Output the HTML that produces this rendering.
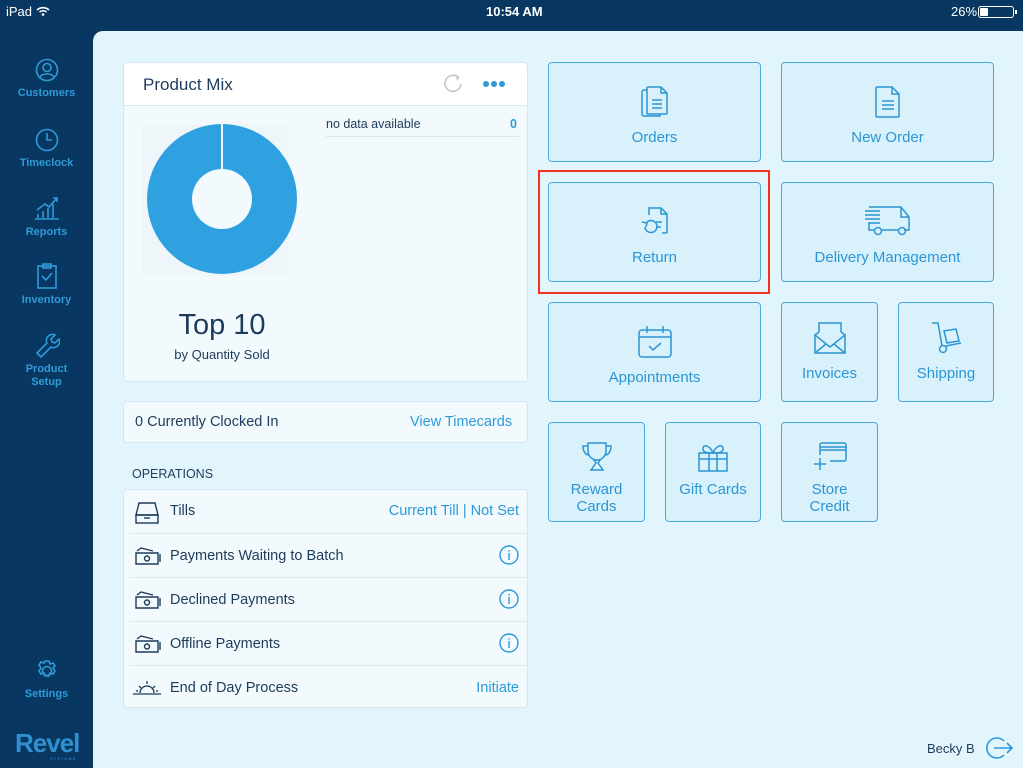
<!DOCTYPE html>
<html><head><meta charset="utf-8"><style>
*{box-sizing:border-box;margin:0;padding:0}
body{width:1023px;height:768px;background:#083862;font-family:"Liberation Sans",sans-serif;position:relative;overflow:hidden}
.abs{position:absolute}
.sb{color:#fff;font-size:13px;top:4px}
.main{left:93px;top:31px;width:930px;height:737px;background:#e3f5fc;border-top-left-radius:10px}
.nav{left:0;width:93px;text-align:center;color:#2f9ad8;font-size:11px;font-weight:bold;line-height:13px}
.nav svg{display:block;margin:0 auto 5px}
.card{background:#f3fafd;border:1px solid #d5e6ee;border-radius:4px}
.btn{background:#d8f1fb;border:1.5px solid #4aaae0;border-radius:4px;color:#2c96d4;font-size:15px;text-align:center;line-height:17px}
.btn svg{display:block;margin:0 auto}
.row{position:absolute;left:5px;right:0;height:44px;border-top:1px solid #dde9ef;font-size:14.5px;color:#1d3b5a}
.row span.l{position:absolute;left:41px;top:13px}
.row .r{position:absolute;right:8px;top:13px;color:#2c9ad8}
.row svg{position:absolute;left:6px;top:12px}
</style></head><body>
<div class="abs sb" style="left:6px">iPad <svg width="14" height="10" viewBox="0 0 14 10" style="vertical-align:0"><path d="M1 4a9 9 0 0 1 12 0M3.5 6a5.5 5.5 0 0 1 7 0" stroke="#fff" stroke-width="1.6" fill="none"/><circle cx="7" cy="8.5" r="1.3" fill="#fff"/></svg></div>
<div class="abs sb" style="left:486px;font-weight:bold">10:54 AM</div>
<div class="abs sb" style="left:951px">26%</div>
<div class="abs" style="left:978px;top:6px;width:36px;height:12px;border:1px solid #fff;border-radius:3px"><div style="margin:1px;width:8px;height:8px;background:#fff;border-radius:1px"></div></div>
<div class="abs" style="left:1015px;top:10px;width:2px;height:4px;background:#fff"></div>

<div class="abs nav" style="top:58px"><svg width="24" height="24" viewBox="0 0 24 24" fill="none" stroke="#2f9ad8" stroke-width="1.6"><circle cx="12" cy="12" r="10.5"/><circle cx="12" cy="9.5" r="4"/><path d="M5 19c2-4 12-4 14 0"/></svg>Customers</div>
<div class="abs nav" style="top:128px"><svg width="24" height="24" viewBox="0 0 24 24" fill="none" stroke="#2f9ad8" stroke-width="1.6"><circle cx="12" cy="12" r="10.5"/><path d="M12 5v7h5"/></svg>Timeclock</div>
<div class="abs nav" style="top:195px"><svg width="28" height="26" viewBox="0 0 28 26" fill="none" stroke="#2f9ad8" stroke-width="1.6"><path d="M2 24h24M5 23v-4M10 23v-7M15 23v-10M20 23v-14M4 15l8-6 4 3 8-9M20 3h4v4"/></svg>Reports</div>
<div class="abs nav" style="top:263px"><svg width="22" height="26" viewBox="0 0 22 26" fill="none" stroke="#2f9ad8" stroke-width="1.6"><rect x="2" y="3" width="18" height="22"/><rect x="7" y="1" width="8" height="4"/><path d="M6 13l4 4 6-7"/></svg>Inventory</div>
<div class="abs nav" style="top:332px"><svg width="26" height="26" viewBox="0 0 26 26" fill="none" stroke="#2f9ad8" stroke-width="1.6"><path d="M3 21l10-10a6 6 0 0 1 8-8l-4 4 1 3 3 1 4-4a6 6 0 0 1-8 8L7 25z"/></svg>Product<br>Setup</div>
<div class="abs nav" style="top:659px"><svg width="24" height="24" viewBox="0 0 24 24" fill="none" stroke="#2f9ad8" stroke-width="1.6"><circle cx="12" cy="12" r="4.5"/><path d="M10 2h4l1 3 3-1 2 3-2 2 2 3-2 3-3-1-1 3h-4l-1-3-3 1-2-3 2-3-2-3 2-3 3 1z"/></svg>Settings</div>
<div class="abs" style="left:15px;top:728px;color:#2f8fd0;font-size:26px;font-weight:bold;letter-spacing:-1px">Revel</div>
<div class="abs" style="left:50px;top:756px;color:#2f8fd0;font-size:4px;letter-spacing:1px">SYSTEMS</div>

<div class="abs main"></div>

<div class="abs card" style="left:123px;top:62px;width:405px;height:320px"></div>
<div class="abs" style="left:124px;top:63px;width:403px;height:43px;background:#fff;border-bottom:1px solid #dbe7ee;border-radius:4px 4px 0 0"></div>
<div class="abs" style="left:143px;top:75px;font-size:17px;color:#1d3b5a">Product Mix</div>
<svg class="abs" style="left:442px;top:72px" width="22" height="22" viewBox="0 0 22 22" fill="none" stroke="#c8cdd1" stroke-width="1.8"><path d="M17 6a8 8 0 1 0 2 6"/><path d="M13 2l5 3-3 4" fill="#c8cdd1" stroke="none"/></svg>
<div class="abs" style="left:483px;top:81px;width:6px;height:6px;border-radius:3px;background:#2c9ad8;box-shadow:8px 0 #2c9ad8,16px 0 #2c9ad8"></div>
<div class="abs" style="left:326px;top:117px;font-size:12.5px;color:#1d3b5a">no data available</div>
<div class="abs" style="left:510px;top:117px;font-size:12.5px;color:#2c9ad8;font-weight:bold">0</div>
<div class="abs" style="left:326px;top:136px;width:193px;height:1px;background:#dbe7ee"></div>
<div class="abs" style="left:142px;top:124px;width:146px;height:152px;background:#eef6fa"></div>
<svg class="abs" style="left:146px;top:123px" width="152" height="152" viewBox="0 0 152 152"><circle cx="76" cy="76" r="75" fill="#30a1e0"/><circle cx="76" cy="76" r="30" fill="#f3fafd"/><line x1="76" y1="0" x2="76" y2="46" stroke="#f3fafd" stroke-width="2"/></svg>
<div class="abs" style="left:123px;top:309px;width:198px;text-align:center;font-size:29px;color:#1d3b5a">Top 10</div>
<div class="abs" style="left:123px;top:347px;width:198px;text-align:center;font-size:13px;color:#1d3b5a">by Quantity Sold</div>

<div class="abs card" style="left:123px;top:401px;width:405px;height:42px"></div>
<div class="abs" style="left:135px;top:414px;font-size:14.5px;color:#1d3b5a">0 Currently Clocked In</div>
<div class="abs" style="left:410px;top:414px;font-size:14.5px;color:#2c9ad8">View Timecards</div>
<div class="abs" style="left:132px;top:467px;font-size:12.5px;color:#1d3b5a">OPERATIONS</div>

<div class="abs card" style="left:123px;top:489px;width:405px;height:219px">
 <div class="row" style="top:0;border-top:none;height:43px"><svg width="24" height="22" viewBox="0 0 24 22" fill="none" stroke="#1d3b5a" stroke-width="1.4"><path d="M4 1h16l3 12H1z"/><rect x="1" y="13" width="22" height="8"/><path d="M9 16h6"/></svg><span class="l">Tills</span><span class="r">Current Till | Not Set</span></div>
 <div class="row" style="top:43px"><svg width="26" height="20" viewBox="0 0 26 20" fill="none" stroke="#1d3b5a" stroke-width="1.4"><path d="M2 5l4-3 12 3M1 7h22v11H1zM25 8v8"/><circle cx="12" cy="12.5" r="2.5"/></svg><span class="l" style="top:14px">Payments Waiting to Batch</span><svg style="left:auto;right:8px;top:11px" width="20" height="20" viewBox="0 0 20 20" fill="none" stroke="#2c9ad8" stroke-width="1.4"><circle cx="10" cy="10" r="9"/><path d="M10 8v7M10 5v1.5"/></svg></div>
 <div class="row" style="top:87px"><svg width="26" height="20" viewBox="0 0 26 20" fill="none" stroke="#1d3b5a" stroke-width="1.4"><path d="M2 5l4-3 12 3M1 7h22v11H1zM25 8v8"/><circle cx="12" cy="12.5" r="2.5"/></svg><span class="l" style="top:14px">Declined Payments</span><svg style="left:auto;right:8px;top:11px" width="20" height="20" viewBox="0 0 20 20" fill="none" stroke="#2c9ad8" stroke-width="1.4"><circle cx="10" cy="10" r="9"/><path d="M10 8v7M10 5v1.5"/></svg></div>
 <div class="row" style="top:131px"><svg width="26" height="20" viewBox="0 0 26 20" fill="none" stroke="#1d3b5a" stroke-width="1.4"><path d="M2 5l4-3 12 3M1 7h22v11H1zM25 8v8"/><circle cx="12" cy="12.5" r="2.5"/></svg><span class="l" style="top:14px">Offline Payments</span><svg style="left:auto;right:8px;top:11px" width="20" height="20" viewBox="0 0 20 20" fill="none" stroke="#2c9ad8" stroke-width="1.4"><circle cx="10" cy="10" r="9"/><path d="M10 8v7M10 5v1.5"/></svg></div>
 <div class="row" style="top:175px"><svg style="left:3px" width="30" height="20" viewBox="0 0 30 20" fill="none" stroke="#1d3b5a" stroke-width="1.3"><path d="M1 16h28M8 15a7 7 0 0 1 14 0M15 3v3M7 8l2 2M23 8l-2 2M4 13h2M24 13h2"/></svg><span class="l" style="top:14px">End of Day Process</span><span class="r" style="top:14px">Initiate</span></div>
</div>

<div class="abs btn" style="left:548px;top:62px;width:213px;height:100px;padding-top:22px"><svg width="32" height="34" viewBox="0 0 32 34" fill="none" stroke="#2c96d4" stroke-width="1.5"><path d="M8 5H5a2 2 0 0 0-2 2v22a2 2 0 0 0 2 2h16v-2"/><path d="M9 2h13l6 6v20a1 1 0 0 1-1 1H9a1 1 0 0 1-1-1V3a1 1 0 0 1 1-1zM22 2v6h6M13 15h10M13 19h10M13 23h10"/></svg><div style="margin-top:10px">Orders</div></div>
<div class="abs btn" style="left:781px;top:62px;width:213px;height:100px;padding-top:22px"><svg width="28" height="34" viewBox="0 0 28 34" fill="none" stroke="#2c96d4" stroke-width="1.5"><path d="M3 2h15l7 7v22a1 1 0 0 1-1 1H3a1 1 0 0 1-1-1V3a1 1 0 0 1 1-1zM18 2v7h7M8 16h12M8 20h12M8 24h12"/></svg><div style="margin-top:10px">New Order</div></div>
<div class="abs btn" style="left:548px;top:182px;width:213px;height:100px;padding-top:22px"><svg width="32" height="34" viewBox="0 0 32 34" fill="none" stroke="#2c96d4" stroke-width="1.5"><path d="M10 10V3h12l6 6v18a1 1 0 0 1-1 1h-4M22 3v6h6M17 17h6M17 22h5"/><path d="M6 22a6 6 0 1 0 2-5M3 17l5 1-1 4"/></svg><div style="margin-top:10px">Return</div></div>
<div class="abs btn" style="left:781px;top:182px;width:213px;height:100px;padding-top:22px"><svg width="48" height="32" viewBox="0 0 48 32" fill="none" stroke="#2c96d4" stroke-width="1.5"><path d="M1 6h15M1 10h15M1 14h15M4 18h12M5 2h32l8 10v13h-5M34 25H18M10 25H5V18M37 2v10h8"/><circle cx="14" cy="26" r="3.5"/><circle cx="38" cy="26" r="3.5"/></svg><div style="margin-top:12px">Delivery Management</div></div>
<div class="abs btn" style="left:548px;top:302px;width:213px;height:100px;padding-top:22px"><svg width="36" height="34" viewBox="0 0 36 34" fill="none" stroke="#2c96d4" stroke-width="1.5"><rect x="2" y="5" width="32" height="27" rx="3"/><path d="M2 12h32M10 1v7M26 1v7M12 21l4 4 8-7"/></svg><div style="margin-top:10px">Appointments</div></div>
<div class="abs btn" style="left:781px;top:302px;width:97px;height:100px;padding-top:18px"><svg width="34" height="34" viewBox="0 0 34 34" fill="none" stroke="#2c96d4" stroke-width="1.5"><path d="M2 14v18h30V14L17 26zM2 32l11-9M32 32l-11-9M6 11V2h22v9M2 14l4-3M32 14l-4-3"/></svg><div style="margin-top:10px">Invoices</div></div>
<div class="abs btn" style="left:898px;top:302px;width:96px;height:100px;padding-top:18px"><svg width="34" height="34" viewBox="0 0 34 34" fill="none" stroke="#2c96d4" stroke-width="1.5"><path d="M3 2h6l4 23M17 25l15-3M15 10l12-2 3 12-12 2z"/><circle cx="14" cy="28" r="3.5"/></svg><div style="margin-top:10px">Shipping</div></div>
<div class="abs btn" style="left:548px;top:422px;width:97px;height:100px;padding-top:18px"><svg width="32" height="32" viewBox="0 0 32 32" fill="none" stroke="#2c96d4" stroke-width="1.5"><path d="M7 2h18v8a9 9 0 0 1-18 0zM7 5H2c0 6 3 9 6 9M25 5h5c0 6-3 9-6 9M13 19h6l-2 3 5 7H10l5-7z"/></svg><div style="margin-top:8px">Reward<br>Cards</div></div>
<div class="abs btn" style="left:665px;top:422px;width:96px;height:100px;padding-top:18px"><svg width="32" height="32" viewBox="0 0 32 32" fill="none" stroke="#2c96d4" stroke-width="1.5"><rect x="2" y="12" width="28" height="18"/><path d="M2 18h28M12 12v18M20 12v18M16 12c-2-6-9-10-10-5s6 5 10 5c4 0 11 0 10-5s-8-1-10 5"/></svg><div style="margin-top:8px">Gift Cards</div></div>
<div class="abs btn" style="left:781px;top:422px;width:97px;height:100px;padding-top:18px"><svg width="36" height="32" viewBox="0 0 36 32" fill="none" stroke="#2c96d4" stroke-width="1.5"><path d="M8 14V4a2 2 0 0 1 2-2h22a2 2 0 0 1 2 2v14a2 2 0 0 1-2 2H18M8 6h26M8 9h26M2 23h12M8 17v12"/></svg><div style="margin-top:8px">Store<br>Credit</div></div>
<div class="abs" style="left:538px;top:170px;width:232px;height:124px;border:2.5px solid #f0331c"></div>

<div class="abs" style="left:927px;top:741px;font-size:13px;color:#1d3b5a">Becky B</div>
<svg class="abs" style="left:986px;top:736px" width="28" height="24" viewBox="0 0 28 24" fill="none" stroke="#2c9ad8" stroke-width="1.6"><path d="M18 5a10 10 0 1 0 0 14M8 12h18M21 7l5 5-5 5"/></svg>
</body></html>
